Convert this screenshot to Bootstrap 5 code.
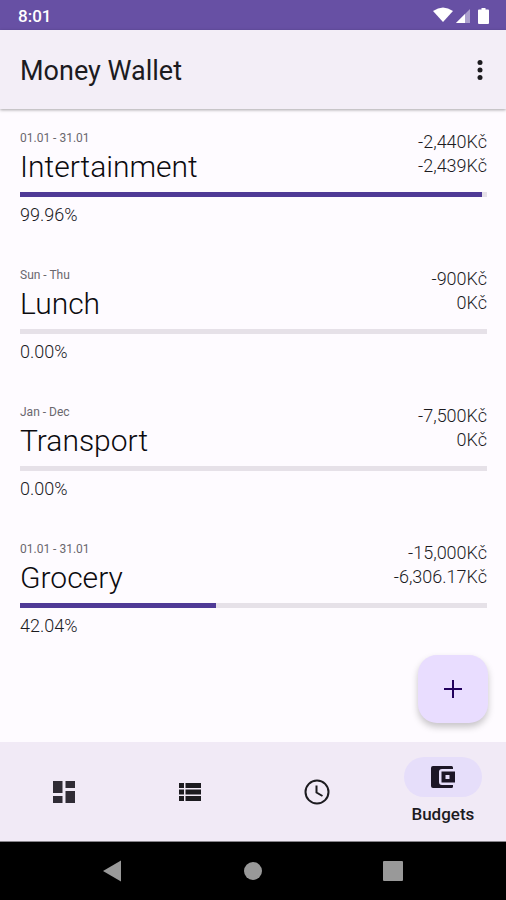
<!DOCTYPE html>
<html lang="en">
<head>
<meta charset="utf-8">
<meta name="viewport" content="width=device-width, initial-scale=1">
<title>Money Wallet</title>
<link href="https://cdn.jsdelivr.net/npm/bootstrap@5.3.0/dist/css/bootstrap.min.css" rel="stylesheet">
<style>
  body { font-family: Roboto, "Liberation Sans", sans-serif; background: #fefbff; color: #1c1b1f; }
  .status-bar { background: #6750a4; height: 30px; padding: 2px 15px 0 18px; font-size: 17px; line-height: 28px; }
  .app-bar { background: #f3eef7; height: 79px; padding: 2px 15px 0 20px; box-shadow: 0 1px 3px rgba(0,0,0,.35); z-index: 1; }
  .app-title { font-size: 27px; line-height: 36px; }
  .icon-btn { background: none; border: 0; padding: 0; color: #1c1b1f; line-height: 1; }
  .budget-list { padding-top: 1px; }
  .budget { height: 137px; padding: 20px 19px 0 20px; }
  .period { font-size: 12px; line-height: 16px; color: #6a676e; }
  .budget-name { font-size: 30px; line-height: 36px; font-weight: 300; color: #0c0b0f; margin: 3px 0 0; }
  .amounts { font-size: 18px; line-height: 24px; font-weight: 300; }
  .budget .progress { height: 5px; border-radius: 0; background: #e6e1e8; margin-top: 7px; }
  .budget .progress-bar { background: #4f3a96; }
  .percent { font-size: 18px; line-height: 24px; font-weight: 300; margin-top: 6px; }
  .fab { right: 18px; bottom: 19px; width: 70px; height: 68px; border-radius: 19px; background: #e9ddff; border: 0; color: #22005d; box-shadow: 0 4px 7px rgba(0,0,0,.22); }
  .tab-bar { background: #f1eaf6; height: 100px; border-bottom: 1px solid #88858b; padding-left: 1px; }
  .tab { flex: 1 1 0; color: #1c1b1f; font-size: 17px; line-height: 26px; }
  .tab-pill { width: 78px; height: 40px; border-radius: 20px; background: #e6defa; }
  .system-bar { background: #000; height: 58px; padding: 0 43px; }
  .system-bar .icon-btn { color: #999; flex: 1 1 0; }
</style>
</head>
<body>
<div class="d-flex flex-column min-vh-100">
  <div class="status-bar d-flex justify-content-between align-items-center text-white fw-medium">
    <span>8:01</span>
    <svg width="58" height="18" viewBox="0 0 58 18" fill="#fff" aria-hidden="true">
      <path d="M0 4Q10 -3 20 4L10 15Z"/>
      <path d="M37 2V16H23Z" opacity=".45"/>
      <path d="M32 7V16H23Z"/>
      <path d="M46 2.500h2.500V1h4v1.500H55a1 1 0 0 1 1 1V16a1 1 0 0 1-1 1h-9a1 1 0 0 1-1-1V3.500a1 1 0 0 1 1-1Z"/>
    </svg>
  </div>
  <header class="app-bar d-flex justify-content-between align-items-center position-relative">
    <h1 class="app-title fw-normal m-0">Money Wallet</h1>
    <button class="icon-btn" type="button" aria-label="More options">
      <svg width="22" height="24" viewBox="0 0 22 24" fill="currentColor"><circle cx="11" cy="3.500" r="2.500"/><circle cx="11" cy="11" r="2.500"/><circle cx="11" cy="18.500" r="2.500"/></svg>
    </button>
  </header>
  <main class="budget-list flex-grow-1 position-relative">
    <section class="budget">
      <div class="d-flex justify-content-between">
        <div><div class="period">01.01 - 31.01</div><h2 class="budget-name">Intertainment</h2></div>
        <div class="amounts text-end"><div>-2,440Kč</div><div>-2,439Kč</div></div>
      </div>
      <div class="progress" role="progressbar" aria-label="Intertainment" aria-valuenow="99.96" aria-valuemin="0" aria-valuemax="100"><div class="progress-bar" style="width:99%"></div></div>
      <div class="percent">99.96%</div>
    </section>
    <section class="budget">
      <div class="d-flex justify-content-between">
        <div><div class="period">Sun - Thu</div><h2 class="budget-name">Lunch</h2></div>
        <div class="amounts text-end"><div>-900Kč</div><div>0Kč</div></div>
      </div>
      <div class="progress" role="progressbar" aria-label="Lunch" aria-valuenow="0" aria-valuemin="0" aria-valuemax="100"><div class="progress-bar" style="width:0%"></div></div>
      <div class="percent">0.00%</div>
    </section>
    <section class="budget">
      <div class="d-flex justify-content-between">
        <div><div class="period">Jan - Dec</div><h2 class="budget-name">Transport</h2></div>
        <div class="amounts text-end"><div>-7,500Kč</div><div>0Kč</div></div>
      </div>
      <div class="progress" role="progressbar" aria-label="Transport" aria-valuenow="0" aria-valuemin="0" aria-valuemax="100"><div class="progress-bar" style="width:0%"></div></div>
      <div class="percent">0.00%</div>
    </section>
    <section class="budget">
      <div class="d-flex justify-content-between">
        <div><div class="period">01.01 - 31.01</div><h2 class="budget-name">Grocery</h2></div>
        <div class="amounts text-end"><div>-15,000Kč</div><div>-6,306.17Kč</div></div>
      </div>
      <div class="progress" role="progressbar" aria-label="Grocery" aria-valuenow="42.04" aria-valuemin="0" aria-valuemax="100"><div class="progress-bar" style="width:42.04%"></div></div>
      <div class="percent">42.04%</div>
    </section>
    <button class="fab position-absolute d-flex align-items-center justify-content-center" type="button" aria-label="Add budget">
      <svg width="18" height="18" viewBox="0 0 18 18" fill="none" stroke="currentColor" stroke-width="2"><path d="M9 0V18M0 9H18"/></svg>
    </button>
  </main>
  <nav class="tab-bar d-flex" aria-label="Main">
    <a class="tab d-flex align-items-center justify-content-center" href="#overview" aria-label="Overview">
      <svg width="22" height="22" viewBox="0 0 22 22" fill="#302c35"><path d="M0 0H9.500V12H0ZM12.500 0H22V7H12.500ZM0 15H9.500V22H0ZM12.500 10H22V22H12.500Z"/></svg>
    </a>
    <a class="tab d-flex align-items-center justify-content-center" href="#records" aria-label="Records">
      <svg width="22" height="18" viewBox="0 0 22 18" fill="#1c1b1f"><path d="M0 0H5V5H0ZM6.500 0H22V5H6.500ZM0 6.500H5V11.500H0ZM6.500 6.500H22V11.500H6.500ZM0 13H5V18H0ZM6.500 13H22V18H6.500Z"/></svg>
    </a>
    <a class="tab d-flex align-items-center justify-content-center" href="#history" aria-label="History">
      <svg width="26" height="26" viewBox="0 0 26 26" fill="none" stroke="#1c1b1f" stroke-width="2"><circle cx="13" cy="13" r="11.500"/><path d="M12.500 6.500V13.500L18.500 17"/></svg>
    </a>
    <a class="tab d-flex flex-column align-items-center justify-content-center text-decoration-none fw-medium" href="#budgets" aria-current="page">
      <span class="tab-pill d-flex align-items-center justify-content-center mb-1">
        <svg width="24" height="22" viewBox="0 0 24 22" fill="#1c1626"><path d="M2 0H20.500A1.500 1.500 0 0 1 22 1.500V3H11A3 3 0 0 0 8 6V16A3 3 0 0 0 11 19H22V20.500A1.500 1.500 0 0 1 20.500 22H2A2 2 0 0 1 0 20V2A2 2 0 0 1 2 0Z"/><path fill-rule="evenodd" d="M10.500 5.500H24V16.500H10.500ZM14.500 9V13H18.500V9Z"/></svg>
      </span>
      <span>Budgets</span>
    </a>
  </nav>
  <div class="system-bar d-flex align-items-center">
    <button class="icon-btn" type="button" aria-label="Back"><svg width="20" height="22" viewBox="0 0 20 22" fill="currentColor"><path d="M0 11L18 .5V21.500Z"/></svg></button>
    <button class="icon-btn" type="button" aria-label="Home"><svg width="20" height="20" viewBox="0 0 20 20" fill="currentColor"><circle cx="10" cy="10" r="9"/></svg></button>
    <button class="icon-btn" type="button" aria-label="Recent apps"><svg width="20" height="20" viewBox="0 0 20 20" fill="currentColor"><rect width="20" height="20" rx="1"/></svg></button>
  </div>
</div>
<script src="https://cdn.jsdelivr.net/npm/bootstrap@5.3.0/dist/js/bootstrap.bundle.min.js"></script>
</body>
</html>
